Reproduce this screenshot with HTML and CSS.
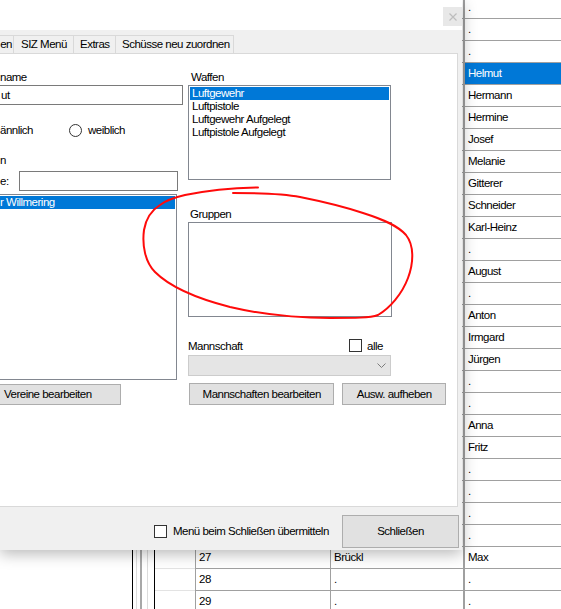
FILE: index.html
```html
<!DOCTYPE html>
<html lang="de">
<head>
  <meta charset="UTF-8" />
  <title>Schützen bearbeiten</title>
  <link rel="stylesheet" href="styles.css">
</head>
<body>
  <div class="desk">
    <div class="sheet">
      <div class="row"><div class="c-edge"></div><div class="c-hdr"></div><div class="c-num"></div><div class="c-last"></div><div class="c-first">.</div></div>
      <div class="row"><div class="c-edge"></div><div class="c-hdr"></div><div class="c-num"></div><div class="c-last"></div><div class="c-first">.</div></div>
      <div class="row"><div class="c-edge"></div><div class="c-hdr"></div><div class="c-num"></div><div class="c-last"></div><div class="c-first">.</div></div>
      <div class="row sel"><div class="c-edge"></div><div class="c-hdr"></div><div class="c-num"></div><div class="c-last"></div><div class="c-first">Helmut</div></div>
      <div class="row"><div class="c-edge"></div><div class="c-hdr"></div><div class="c-num"></div><div class="c-last"></div><div class="c-first">Hermann</div></div>
      <div class="row"><div class="c-edge"></div><div class="c-hdr"></div><div class="c-num"></div><div class="c-last"></div><div class="c-first">Hermine</div></div>
      <div class="row"><div class="c-edge"></div><div class="c-hdr"></div><div class="c-num"></div><div class="c-last"></div><div class="c-first">Josef</div></div>
      <div class="row"><div class="c-edge"></div><div class="c-hdr"></div><div class="c-num"></div><div class="c-last"></div><div class="c-first">Melanie</div></div>
      <div class="row"><div class="c-edge"></div><div class="c-hdr"></div><div class="c-num"></div><div class="c-last"></div><div class="c-first">Gitterer</div></div>
      <div class="row"><div class="c-edge"></div><div class="c-hdr"></div><div class="c-num"></div><div class="c-last"></div><div class="c-first">Schneider</div></div>
      <div class="row"><div class="c-edge"></div><div class="c-hdr"></div><div class="c-num"></div><div class="c-last"></div><div class="c-first">Karl-Heinz</div></div>
      <div class="row"><div class="c-edge"></div><div class="c-hdr"></div><div class="c-num"></div><div class="c-last"></div><div class="c-first">.</div></div>
      <div class="row"><div class="c-edge"></div><div class="c-hdr"></div><div class="c-num"></div><div class="c-last"></div><div class="c-first">August</div></div>
      <div class="row"><div class="c-edge"></div><div class="c-hdr"></div><div class="c-num"></div><div class="c-last"></div><div class="c-first">.</div></div>
      <div class="row"><div class="c-edge"></div><div class="c-hdr"></div><div class="c-num"></div><div class="c-last"></div><div class="c-first">Anton</div></div>
      <div class="row"><div class="c-edge"></div><div class="c-hdr"></div><div class="c-num"></div><div class="c-last"></div><div class="c-first">Irmgard</div></div>
      <div class="row"><div class="c-edge"></div><div class="c-hdr"></div><div class="c-num"></div><div class="c-last"></div><div class="c-first">Jürgen</div></div>
      <div class="row"><div class="c-edge"></div><div class="c-hdr"></div><div class="c-num"></div><div class="c-last"></div><div class="c-first">.</div></div>
      <div class="row"><div class="c-edge"></div><div class="c-hdr"></div><div class="c-num"></div><div class="c-last"></div><div class="c-first">.</div></div>
      <div class="row"><div class="c-edge"></div><div class="c-hdr"></div><div class="c-num"></div><div class="c-last"></div><div class="c-first">Anna</div></div>
      <div class="row"><div class="c-edge"></div><div class="c-hdr"></div><div class="c-num"></div><div class="c-last"></div><div class="c-first">Fritz</div></div>
      <div class="row"><div class="c-edge"></div><div class="c-hdr"></div><div class="c-num"></div><div class="c-last"></div><div class="c-first">.</div></div>
      <div class="row"><div class="c-edge"></div><div class="c-hdr"></div><div class="c-num"></div><div class="c-last"></div><div class="c-first">.</div></div>
      <div class="row"><div class="c-edge"></div><div class="c-hdr"></div><div class="c-num"></div><div class="c-last"></div><div class="c-first">.</div></div>
      <div class="row"><div class="c-edge"></div><div class="c-hdr"></div><div class="c-num"></div><div class="c-last"></div><div class="c-first">.</div></div>
      <div class="row"><div class="c-edge"></div><div class="c-hdr"></div><div class="c-num">27</div><div class="c-last">Brückl</div><div class="c-first">Max</div></div>
      <div class="row"><div class="c-edge"></div><div class="c-hdr"></div><div class="c-num">28</div><div class="c-last">.</div><div class="c-first">.</div></div>
      <div class="row"><div class="c-edge"></div><div class="c-hdr"></div><div class="c-num">29</div><div class="c-last">.</div><div class="c-first">.</div></div>
    </div>

    <div class="dialog">
      <div class="titlebar">
        <div class="close">
          <svg width="8" height="8" viewBox="0 0 8 8"><path d="M0.5 0.5 L7.5 7.5 M7.5 0.5 L0.5 7.5" stroke="#bdbdbd" stroke-width="1.2" fill="none"/></svg>
        </div>
      </div>

      <div class="tabs">
        <div class="tab tab-cut">en</div>
        <div class="tab tab-siz">SIZ Menü</div>
        <div class="tab tab-extras">Extras</div>
        <div class="tab tab-shots">Schüsse neu zuordnen</div>
      </div>

      <div class="page">
        <div class="col-left">
          <div class="lbl">name</div>
          <div class="field">ut</div>
          <div class="radios">
            <span class="radio-a">ännlich</span>
            <span class="dot"></span>
            <span class="radio-b">weiblich</span>
          </div>
          <div class="lbl lbl-verein">n</div>
          <div class="search">
            <span class="search-lbl">e:</span>
            <div class="field field-search"></div>
          </div>
          <div class="list list-left">
            <div class="item on item-cut">r Willmering</div>
          </div>
          <div class="btn btn-vereine">Vereine bearbeiten</div>
        </div>

        <div class="col-right">
          <div class="lbl lbl-waffen">Waffen</div>
          <div class="list list-waffen">
            <div class="item on">Luftgewehr</div>
            <div class="item">Luftpistole</div>
            <div class="item">Luftgewehr Aufgelegt</div>
            <div class="item">Luftpistole Aufgelegt</div>
          </div>
          <div class="lbl lbl-gruppen">Gruppen</div>
          <div class="list box-gruppen"></div>
          <div class="mrow">
            <span class="mlbl">Mannschaft</span>
            <span class="chk"></span>
            <span class="alle">alle</span>
          </div>
          <div class="combo">
            <svg width="9" height="5" viewBox="0 0 9 5"><path d="M0.5 0.5 L4.5 4.5 L8.5 0.5" stroke="#7c7c7c" fill="none"/></svg>
          </div>
          <div class="btnrow">
            <div class="btn btn-mann">Mannschaften bearbeiten</div>
            <div class="btn btn-ausw">Ausw. aufheben</div>
          </div>
        </div>
      </div>

      <div class="footer">
        <span class="chk chk-menu"></span>
        <span class="chk-text">Menü beim Schließen übermitteln</span>
        <div class="btn btn-close">Schließen</div>
      </div>
    </div>

    <svg class="ink" width="561" height="609" viewBox="0 0 561 609">
      <path d="M258,187.5 C235,188 205,191 185,195 C172,198 165,201 160,205 C152,210 146,218 144,230 C142,245 145,262 155,272 C170,287 195,298 230,307 C260,314 290,318 330,318 C355,318 370,318 378,315 C390,308 402,294 408,278 C414,262 414,245 406,235 C398,226 385,220 363,213 C345,207 325,202 300,197 C285,194 265,193 233,193" fill="none" stroke="#ff0a0a" stroke-width="2" stroke-linecap="round"/>
    </svg>
  </div>
</body>
</html>
```

FILE: styles.css
```css
body {
  margin: 0;
  font-family: "Liberation Sans", Arial, sans-serif;
  font-size: 11.5px;
  letter-spacing: -0.5px;
  color: #000;
}

.desk {
  position: relative;
  width: 561px;
  height: 609px;
  overflow: hidden;
  background: #fff;
  padding-left: 132px;
  box-sizing: border-box;
}

/* grid in the main window behind the dialog */
.sheet {
  margin-top: -3px;
}

.row {
  display: flex;
  height: 22px;
}

.row > div {
  box-sizing: border-box;
  height: 22px;
  line-height: 21px;
  padding-left: 3px;
  white-space: nowrap;
  overflow: hidden;
}

.c-edge {
  width: 23px;
  background: linear-gradient(to right,
    #000 0 1px, #fff 1px 4px, #dcdcdc 4px 5px, #fff 5px 8px,
    #a8a8a8 8px 10px, #fff 10px 15px, #dcdcdc 15px 16px,
    #fff 16px 22px, #000 22px 23px);
}

.c-hdr {
  width: 40px;
  border-bottom: 1px solid #e3e3e3;
}

.c-num {
  width: 135px;
  border-left: 1px solid #a0a0a0;
  border-bottom: 1px solid #a0a0a0;
}

.c-last {
  width: 133px;
  border-left: 1px solid #a0a0a0;
  border-bottom: 1px solid #a0a0a0;
}

.c-first {
  width: 98px;
  border-left: 2px solid #a0a0a0;
  border-bottom: 1px solid #a0a0a0;
}

.row.sel .c-first {
  background: #0078d7;
  color: #fff;
}

/* dialog */
.dialog {
  position: absolute;
  left: 0;
  top: 0;
  z-index: 1;
  width: 462px;
  height: 550px;
  background: #f0f0f0;
  box-shadow: 0 4px 14px rgba(0,0,0,0.28);
  display: flex;
  flex-direction: column;
}

.titlebar {
  height: 30px;
  background: #fff;
  display: flex;
  justify-content: flex-end;
  align-items: flex-start;
  padding-top: 7px;
  box-sizing: border-box;
}

.close {
  width: 19px;
  height: 19px;
  background: #e8e8e8;
  display: flex;
  align-items: center;
  justify-content: center;
}

.tabs {
  display: flex;
  height: 23px;
  padding-top: 5px;
  box-sizing: border-box;
}

.tab {
  height: 18px;
  line-height: 17px;
  padding-left: 6px;
  border-top: 1px solid #d9d9d9;
  border-right: 1px solid #d9d9d9;
  box-sizing: border-box;
  white-space: nowrap;
  flex-shrink: 0;
}

.tab-cut {
  width: 14px;
  padding: 0 1px 0 0;
  display: flex;
  justify-content: flex-end;
}

.tab-siz {
  width: 60px;
  padding-left: 7px;
}

.tab-extras {
  width: 42px;
}

.tab-shots {
  width: 118px;
}

.page {
  height: 454px;
  width: 458px;
  background: #fff;
  border: 1px solid #d9d9d9;
  border-left: none;
  box-sizing: border-box;
  display: flex;
  padding-top: 15px;
}

.col-left {
  width: 185px;
  margin-left: -2px;
  display: flex;
  flex-direction: column;
}

.col-right {
  width: 258px;
  margin-left: 5px;
  display: flex;
  flex-direction: column;
}

.lbl {
  height: 15px;
  line-height: 16px;
  padding-left: 2px;
  white-space: nowrap;
}

.field {
  height: 20px;
  border: 1px solid #7a7a7a;
  background: #fff;
  box-sizing: border-box;
  line-height: 18px;
  padding-left: 2px;
  margin-top: 1px;
}

.radios {
  display: flex;
  align-items: center;
  height: 16px;
  margin-top: 17px;
}

.radio-a {
  width: 71px;
  padding-left: 2px;
  box-sizing: border-box;
}

.dot {
  width: 13px;
  height: 13px;
  border: 1px solid #333;
  border-radius: 50%;
  box-sizing: border-box;
  background: #fff;
}

.radio-b {
  margin-left: 6px;
}

.lbl-verein {
  margin-top: 14px;
}

.search {
  display: flex;
  height: 20px;
  margin-top: 4px;
}

.search-lbl {
  width: 21px;
  padding-left: 2px;
  box-sizing: border-box;
  line-height: 20px;
}

.field-search {
  width: 159px;
  margin-top: 0;
}

.list {
  border: 1px solid #828790;
  background: #fff;
  padding: 1px;
  box-sizing: border-box;
}

.item {
  height: 13px;
  line-height: 13px;
  padding-left: 2px;
  white-space: nowrap;
}

.item.on {
  background: #0078d7;
  color: #fff;
}

.item-cut {
  padding-left: 0;
}

.list-left {
  margin-top: 3px;
  height: 186px;
  width: 179px;
}

.btn {
  height: 21px;
  line-height: 19px;
  background: #e1e1e1;
  border: 1px solid #adadad;
  box-sizing: border-box;
  text-align: center;
  white-space: nowrap;
}

.btn-vereine {
  margin-top: 4px;
  width: 123px;
  text-align: left;
  padding-left: 5px;
}

.lbl-waffen {
  padding-left: 3px;
}

.list-waffen {
  margin-top: 1px;
  height: 95px;
  width: 203px;
}

.lbl-gruppen {
  margin-top: 26px;
}

.box-gruppen {
  margin-top: 1px;
  height: 95px;
  width: 204px;
}

.mrow {
  display: flex;
  align-items: center;
  height: 15px;
  margin-top: 21px;
}

.mlbl {
  width: 161px;
}

.chk {
  width: 13px;
  height: 13px;
  border: 1px solid #333;
  background: #fff;
  box-sizing: border-box;
  flex-shrink: 0;
}

.alle {
  margin-left: 5px;
}

.combo {
  margin-top: 2px;
  height: 21px;
  width: 203px;
  background: #e5e5e5;
  border: 1px solid #cccccc;
  box-sizing: border-box;
  display: flex;
  align-items: center;
  justify-content: flex-end;
  padding-right: 4px;
}

.btnrow {
  display: flex;
  gap: 8px;
  margin-top: 7px;
}

.btnrow .btn {
  height: 22px;
  line-height: 20px;
}

.btn-mann {
  width: 146px;
  margin-left: 1px;
}

.btn-ausw {
  width: 104px;
}

.footer {
  flex: 1;
  display: flex;
  align-items: flex-start;
  padding: 8px 3px 0 154px;
}

.chk-menu {
  margin-top: 10px;
}

.chk-text {
  margin-left: 6px;
  margin-top: 9px;
  line-height: 15px;
  white-space: nowrap;
}

.btn-close {
  margin-left: auto;
  width: 117px;
  height: 33px;
  line-height: 31px;
}

.ink {
  position: absolute;
  left: 0;
  top: 0;
  z-index: 2;
  pointer-events: none;
}
```
